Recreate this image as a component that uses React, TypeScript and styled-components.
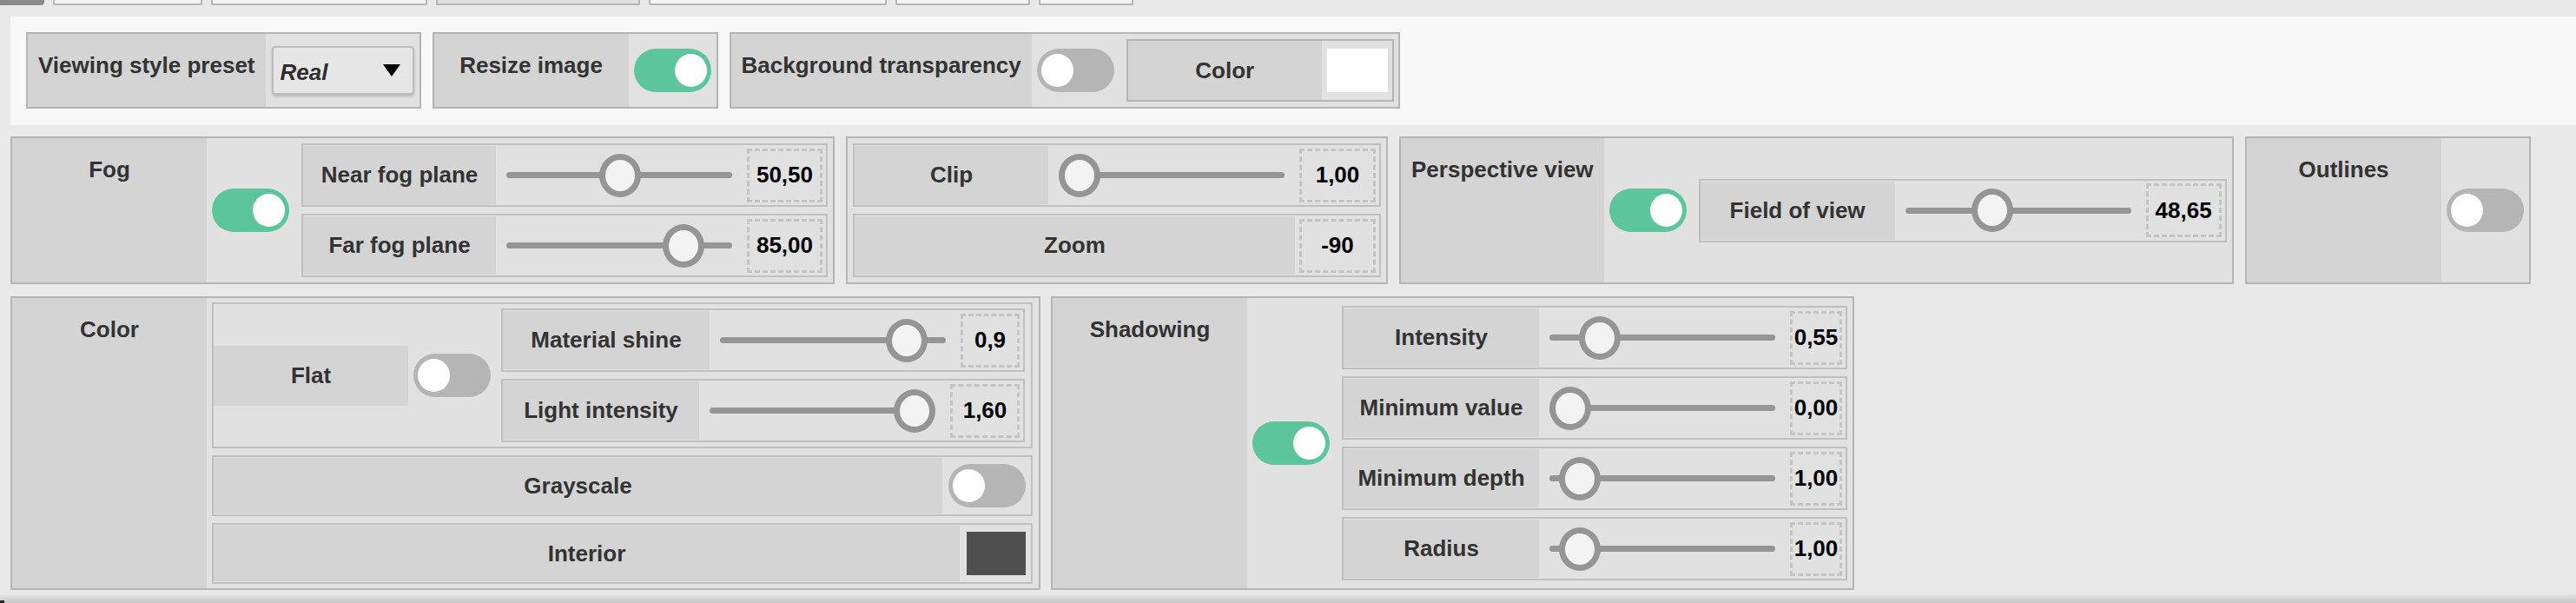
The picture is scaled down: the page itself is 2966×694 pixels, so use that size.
import React from "react";
import styled, { createGlobalStyle } from "styled-components";

const GlobalStyle = createGlobalStyle`
  html, body { margin: 0; padding: 0; background: #e9e9e9; }
  body { font-family: "Liberation Sans", Arial, Helvetica, sans-serif; color: #333; }
  * { box-sizing: border-box; }
`;

const Page = styled.div`
  width: 2966px;
  height: 694px;
  display: flex;
  flex-direction: column;
  overflow: hidden;
  background: #e9e9e9;
`;

const TabStrip = styled.div`
  display: flex;
  gap: 10px;
  height: 6px;
  flex-shrink: 0;
`;

const Tab = styled.div<{ $w: number; $tone?: "dark" | "active" | "plain" }>`
  width: ${(p) => p.$w}px;
  border: 2px solid ${(p) => (p.$tone === "dark" ? "#8a8a8a" : "#b7b7b7")};
  border-top: none;
  border-radius: ${(p) => (p.$tone === "dark" ? "0 0 4px 0" : "0 0 2px 2px")};
  background: ${(p) =>
    p.$tone === "dark" ? "#8c8c8c" : p.$tone === "active" ? "#e0e0e0" : "#f4f4f4"};
`;

const Main = styled.div`
  display: flex;
  flex-direction: column;
  padding: 13px 0 0 12px;
`;

const TopPanel = styled.div`
  display: flex;
  gap: 13px;
  align-items: stretch;
  height: 125px;
  padding: 18px 18px 19px 18px;
  background: #f8f8f8;
`;

const GroupRow = styled.div<{ $top: number; $gap: number }>`
  display: flex;
  align-items: stretch;
  gap: ${(p) => p.$gap}px;
  margin-top: ${(p) => p.$top}px;
`;

const Group = styled.div`
  display: flex;
  align-items: stretch;
  border: 2px solid #b5b5b5;
  background: #e1e1e1;
  flex-shrink: 0;
`;

const GroupLabel = styled.div`
  min-width: 224px;
  padding: 21px 12px 0;
  background: #d4d4d4;
  text-align: center;
  font-size: 26px;
  line-height: 30px;
  font-weight: bold;
  color: #333;
  white-space: nowrap;
`;

const CenterLabel = styled.div<{ $w?: number }>`
  ${(p) => (p.$w ? `width: ${p.$w}px;` : "flex: 1;")}
  display: flex;
  align-items: center;
  justify-content: center;
  padding: 0 12px;
  background: #d4d4d4;
  font-size: 26px;
  font-weight: bold;
  color: #333;
  white-space: nowrap;
`;

const FlatLabel = styled(CenterLabel)`
  align-self: center;
  height: 69px;
`;

const Cell = styled.div<{ $pl: number; $pr: number }>`
  display: flex;
  align-items: center;
  padding: 0 ${(p) => p.$pr}px 0 ${(p) => p.$pl}px;
  flex-shrink: 0;
`;

const Toggle = styled.div<{ $on: boolean }>`
  position: relative;
  width: 89px;
  height: 50px;
  border-radius: 25px;
  background: ${(p) => (p.$on ? "#5cc59b" : "#b5b5b5")};
  flex-shrink: 0;
  &::after {
    content: "";
    position: absolute;
    top: 6px;
    ${(p) => (p.$on ? "right: 5px;" : "left: 5px;")}
    width: 37px;
    height: 38px;
    border-radius: 50%;
    background: #ffffff;
  }
`;

const Select = styled.div`
  width: 164px;
  height: 56px;
  display: flex;
  align-items: center;
  justify-content: space-between;
  padding: 4px 14px 0 8px;
  border: 2px solid #bdbdbd;
  border-radius: 4px;
  background: #e6e6e6;
  box-shadow: 0 2px 3px rgba(0, 0, 0, 0.18);
  font-size: 26px;
  font-weight: bold;
  font-style: italic;
  color: #2e2e2e;
`;

const Caret = styled.span`
  width: 0;
  height: 0;
  border-left: 10px solid transparent;
  border-right: 10px solid transparent;
  border-top: 14px solid #000;
  margin-top: -4px;
`;

const SubGroup = styled.div`
  display: flex;
  align-items: stretch;
  margin: 6px 5px 6px 8px;
  border: 2px solid #b5b5b5;
  background: #e1e1e1;
`;

const Swatch = styled.div<{ $c: string; $w: number }>`
  width: ${(p) => p.$w}px;
  height: 50px;
  background: ${(p) => p.$c};
`;

const Stack = styled.div<{ $w: number; $pad: string }>`
  display: flex;
  flex-direction: column;
  justify-content: center;
  gap: 8px;
  width: ${(p) => p.$w}px;
  padding: ${(p) => p.$pad};
  flex-shrink: 0;
`;

const Row = styled.div<{ $h: number }>`
  display: flex;
  align-items: center;
  height: ${(p) => p.$h}px;
  padding: 1px 0;
  border: 2px solid #c0c0c0;
  background: #e1e1e1;
  flex-shrink: 0;
  & > ${CenterLabel} {
    align-self: stretch;
  }
`;

const TrackArea = styled.div`
  position: relative;
  width: 260px;
  height: 50px;
  margin: 0 17px 0 12px;
  display: flex;
  align-items: center;
  flex-shrink: 0;
`;

const TrackLine = styled.div`
  width: 100%;
  height: 7px;
  border-radius: 4px;
  background: #959595;
`;

const Thumb = styled.div`
  position: absolute;
  top: 0;
  width: 48px;
  height: 50px;
  border-radius: 50%;
  border: 7px solid #959595;
  background: #f3f3f3;
`;

const ValueBox = styled.div<{ $w: number }>`
  width: ${(p) => p.$w}px;
  height: 62px;
  margin-right: 4px;
  display: flex;
  align-items: center;
  justify-content: center;
  overflow: hidden;
  border: 3px dashed #c4c4c4;
  font-size: 26px;
  font-weight: bold;
  color: #000;
  flex-shrink: 0;
`;

const FlatBox = styled.div`
  display: flex;
  align-items: stretch;
  border: 2px solid #c0c0c0;
  background: #e1e1e1;
  height: 168px;
`;

const PlainRow = styled.div`
  display: flex;
  align-items: stretch;
  height: 70px;
  padding: 1px 0;
  border: 2px solid #c0c0c0;
  background: #e1e1e1;
`;

const BottomBar = styled.div`
  margin-top: auto;
  height: 10px;
  display: flex;
  align-items: flex-end;
  background: linear-gradient(#e4e4e4, #c6c6c6);
`;

const Nub = styled.div`
  width: 5px;
  height: 3px;
  background: #2a2a2a;
`;

const THUMB = 48;
const TRACK = 260;

function Slider({ label, value, p, vw }: { label: string; value: string; p: number; vw: number }) {
  return (
    <Row $h={73}>
      <CenterLabel>{label}</CenterLabel>
      <TrackArea>
        <TrackLine />
        <Thumb style={{ left: `${Math.round(p * (TRACK - THUMB))}px` }} />
      </TrackArea>
      <ValueBox $w={vw}>{value}</ValueBox>
    </Row>
  );
}

export default function App() {
  return (
    <Page>
      <GlobalStyle />
      <TabStrip>
        <Tab $w={51} $tone="dark" />
        <Tab $w={172} />
        <Tab $w={249} />
        <Tab $w={235} $tone="active" />
        <Tab $w={274} />
        <Tab $w={155} />
        <Tab $w={109} />
      </TabStrip>
      <Main>
        <TopPanel>
          <Group>
            <GroupLabel>Viewing style preset</GroupLabel>
            <Cell $pl={7} $pr={6}>
              <Select>
                <span>Real</span>
                <Caret />
              </Select>
            </Cell>
          </Group>
          <Group>
            <GroupLabel>Resize image</GroupLabel>
            <Cell $pl={6} $pr={6}>
              <Toggle $on />
            </Cell>
          </Group>
          <Group>
            <GroupLabel>Background transparency</GroupLabel>
            <Cell $pl={6} $pr={6}>
              <Toggle $on={false} />
            </Cell>
            <SubGroup>
              <CenterLabel $w={223}>Color</CenterLabel>
              <Cell $pl={6} $pr={5}>
                <Swatch $c="#ffffff" $w={70} />
              </Cell>
            </SubGroup>
          </Group>
        </TopPanel>

        <GroupRow $top={13} $gap={13}>
          <Group>
            <GroupLabel>Fog</GroupLabel>
            <Cell $pl={6} $pr={6}>
              <Toggle $on />
            </Cell>
            <Stack $w={620} $pad="6px 6px 6px 8px">
              <Slider label="Near fog plane" value="50,50" p={0.505} vw={87} />
              <Slider label="Far fog plane" value="85,00" p={0.85} vw={87} />
            </Stack>
          </Group>
          <Group>
            <Stack $w={620} $pad="6px">
              <Slider label="Clip" value="1,00" p={0} vw={88} />
              <Row $h={73}>
                <CenterLabel>Zoom</CenterLabel>
                <ValueBox $w={88} style={{ marginLeft: "5px" }}>-90</ValueBox>
              </Row>
            </Stack>
          </Group>
          <Group>
            <GroupLabel>Perspective view</GroupLabel>
            <Cell $pl={6} $pr={6}>
              <Toggle $on />
            </Cell>
            <Stack $w={622} $pad="6px 6px 6px 8px">
              <Slider label="Field of view" value="48,65" p={0.36} vw={87} />
            </Stack>
          </Group>
          <Group>
            <GroupLabel>Outlines</GroupLabel>
            <Cell $pl={6} $pr={6}>
              <Toggle $on={false} />
            </Cell>
          </Group>
        </GroupRow>

        <GroupRow $top={14} $gap={12}>
          <Group>
            <GroupLabel>Color</GroupLabel>
            <Stack $w={958} $pad="5px 7px 5px 6px">
              <FlatBox>
                <FlatLabel $w={224}>Flat</FlatLabel>
                <Cell $pl={6} $pr={6}>
                  <Toggle $on={false} />
                </Cell>
                <Stack $w={615} $pad="5px 6px">
                  <Slider label="Material shine" value="0,9" p={0.9} vw={68} />
                  <Slider label="Light intensity" value="1,60" p={1} vw={80} />
                </Stack>
              </FlatBox>
              <PlainRow>
                <CenterLabel>Grayscale</CenterLabel>
                <Cell $pl={7} $pr={6}>
                  <Toggle $on={false} />
                </Cell>
              </PlainRow>
              <PlainRow>
                <CenterLabel>Interior</CenterLabel>
                <Cell $pl={8} $pr={6}>
                  <Swatch $c="#4f4f4f" $w={68} />
                </Cell>
              </PlainRow>
            </Stack>
          </Group>
          <Group>
            <GroupLabel>Shadowing</GroupLabel>
            <Cell $pl={6} $pr={6}>
              <Toggle $on />
            </Cell>
            <Stack $w={596} $pad="6px 6px 6px 8px">
              <Slider label="Intensity" value="0,55" p={0.16} vw={60} />
              <Slider label="Minimum value" value="0,00" p={0} vw={60} />
              <Slider label="Minimum depth" value="1,00" p={0.05} vw={60} />
              <Slider label="Radius" value="1,00" p={0.05} vw={60} />
            </Stack>
          </Group>
        </GroupRow>
      </Main>
      <BottomBar>
        <Nub />
      </BottomBar>
    </Page>
  );
}
